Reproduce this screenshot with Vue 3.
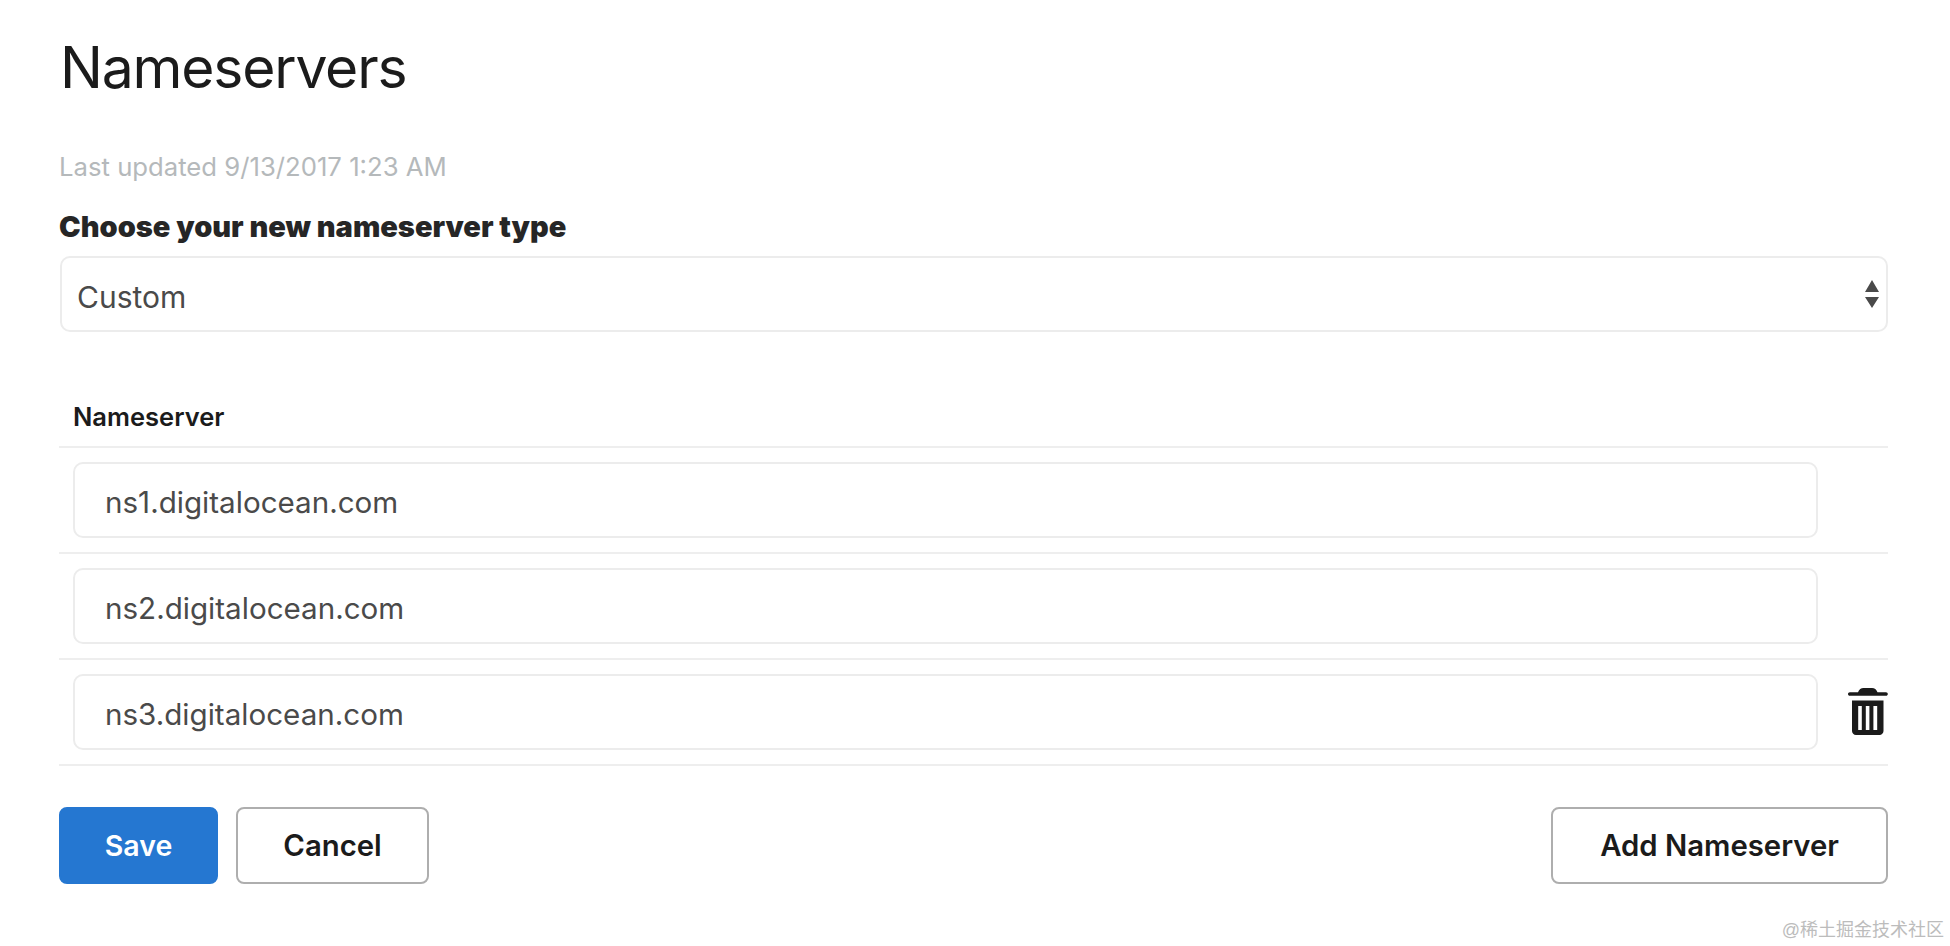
<script setup>
import { ref } from 'vue'

const nameservers = ref([
  { host: 'ns1.digitalocean.com', removable: false },
  { host: 'ns2.digitalocean.com', removable: false },
  { host: 'ns3.digitalocean.com', removable: true },
])
</script>

<template>
  <div class="page">
    <h1 class="title">Nameservers</h1>
    <p class="updated">Last updated 9/13/2017 1:23 AM</p>
    <div class="type-label">Choose your new nameserver type</div>
    <div class="select">
      <span>Custom</span>
      <svg class="select-arrows" width="14" height="28" viewBox="0 0 14 28">
        <path d="M7 0 14 12H0z M0 17H14L7 28z" fill="#4a4a4a" />
      </svg>
    </div>

    <div class="table-head">Nameserver</div>
    <div v-for="ns in nameservers" :key="ns.host" class="row">
      <div class="input">{{ ns.host }}</div>
      <div class="row-action">
        <svg v-if="ns.removable" class="trash" width="40" height="47" viewBox="0 0 40 47">
          <path d="M0 6C0 5 .8 4.200 1.800 4.200H10C11 1.500 13 0 15.500 0H24C26.500 0 28.500 1.500 29.500 4.200H38C39 4.200 39.800 5 39.800 6S39 7.800 38 7.800H1.800C.8 7.800 0 7 0 6Z" fill="#1b1b1b" />
          <path fill-rule="evenodd" d="M4 12.500H35.500V43C35.500 45.200 33.700 47 31.500 47H8C5.800 47 4 45.200 4 43ZM10.200 18V42H13.800V18ZM17.800 18V42H21.400V18ZM25.400 18V42H29.200V18Z" fill="#1b1b1b" />
        </svg>
      </div>
    </div>

    <div class="actions">
      <button class="btn btn-primary">Save</button>
      <button class="btn btn-cancel">Cancel</button>
      <button class="btn btn-add">Add Nameserver</button>
    </div>
    <div class="watermark">@稀土掘金技术社区</div>
  </div>
</template>

<style>
html, body {
  background: #fff;
}
</style>

<style scoped>
.page {
  position: relative;
  box-sizing: border-box;
  height: 946px;
  padding: 30px 62px 0 59px;
  font-family: Inter, "Noto Sans", sans-serif;
  color: #1b1b1b;
}
.title {
  margin: 0;
  padding-left: 1px;
  font-size: 57px;
  line-height: 76px;
  font-weight: 400;
  letter-spacing: -1.2px;
}
.updated {
  margin: 46px 0 0;
  font-size: 25.7px;
  line-height: 30px;
  color: #b5b9bb;
}
.type-label {
  margin-top: 27px;
  font-size: 29px;
  line-height: 36px;
  font-weight: 900;
  color: #262626;
}
.select {
  display: flex;
  align-items: center;
  justify-content: space-between;
  box-sizing: border-box;
  height: 76px;
  margin: 11px 0 0 1px;
  padding: 0 7px 0 15px;
  border: 2px solid #ececec;
  border-radius: 10px;
  font-size: 30px;
  color: #4a4a4a;
}
.select span {
  padding-top: 5px;
}
.table-head {
  margin-top: 67px;
  padding: 0 0 11px 14px;
  border-bottom: 2px solid #eeeeee;
  font-size: 25.5px;
  line-height: 36px;
  font-weight: 600;
}
.row {
  display: flex;
  align-items: center;
  height: 106px;
  padding-left: 14px;
  border-bottom: 2px solid #eeeeee;
  box-sizing: border-box;
}
.input {
  flex: 1;
  display: flex;
  align-items: center;
  box-sizing: border-box;
  height: 76px;
  padding: 3px 0 0 30px;
  border: 2px solid #ececec;
  border-radius: 10px;
  font-size: 29.6px;
  color: #4a4a4a;
}
.row-action {
  display: flex;
  justify-content: flex-end;
  width: 70px;
  flex: none;
}
.trash {
  margin-top: -2px;
}
.actions {
  display: flex;
  gap: 18px;
  margin-top: 41px;
}
.btn {
  box-sizing: border-box;
  height: 77px;
  border: 2px solid #aeaeae;
  border-radius: 8px;
  background: #fff;
  font-family: inherit;
  font-size: 29.3px;
  font-weight: 600;
  color: #1b1b1b;
}
.btn-primary {
  width: 159px;
  border-color: #2577d1;
  background: #2577d1;
  color: #fff;
  font-size: 28.5px;
}
.btn-cancel {
  width: 193px;
}
.btn-add {
  width: 337px;
  margin-left: auto;
}
.watermark {
  position: absolute;
  right: 6px;
  top: 919px;
  font-family: "Liberation Sans", "Noto Sans CJK SC", sans-serif;
  font-size: 18px;
  line-height: 22px;
  color: #bcbcbc;
}
</style>
